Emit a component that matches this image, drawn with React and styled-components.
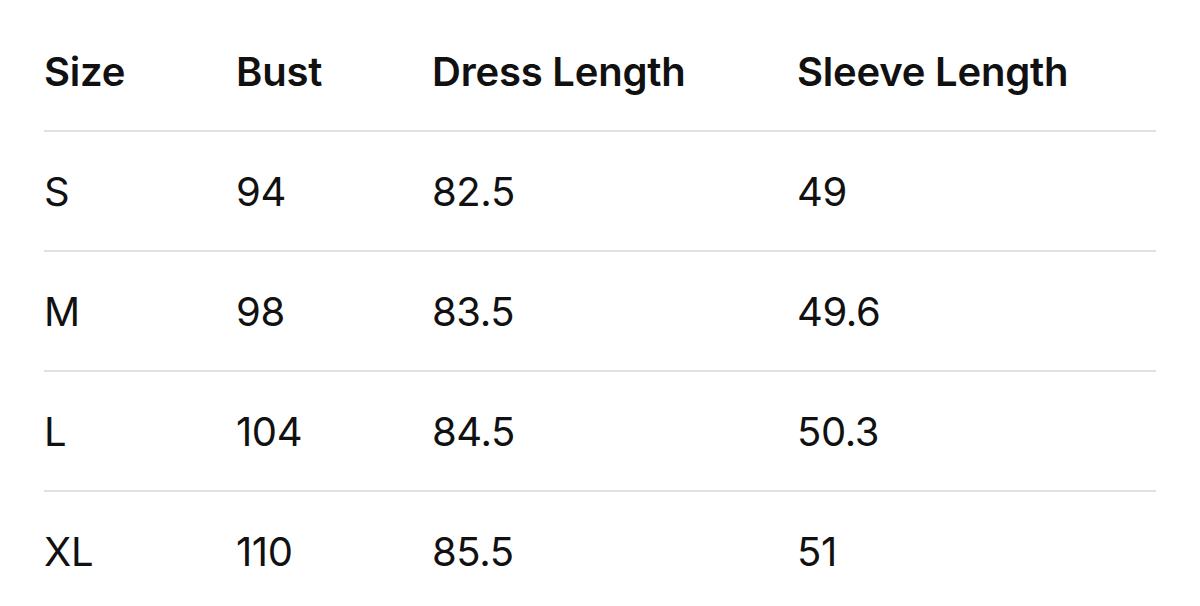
import { createGlobalStyle } from 'styled-components'
import styled from 'styled-components'

const GlobalStyle = createGlobalStyle`
    body {
        margin: 0;
        background: #fff;
        font-family: Inter, "Noto Sans", sans-serif;
        color: #111;
    }
`

const Page = styled.div`
    padding: 12px 44px 0 44px;
    height: 606px;
    box-sizing: border-box;
    overflow: hidden;
`

const Row = styled.div`
    display: grid;
    grid-template-columns: 192px 196px 365px 1fr;
    align-items: center;
    height: 118px;
    border-bottom: ${(p) => (p.last ? 'none' : '2px solid #e2e2e2')};
`

const Cell = styled.div`
    font-size: 40px;
    font-weight: ${(p) => (p.head ? 600 : 400)};
    letter-spacing: ${(p) => (p.head ? '-0.2px' : '-0.4px')};
    white-space: nowrap;
`

const headers = ['Size', 'Bust', 'Dress Length', 'Sleeve Length']
const rows = [
    ['S', '94', '82.5', '49'],
    ['M', '98', '83.5', '49.6'],
    ['L', '104', '84.5', '50.3'],
    ['XL', '110', '85.5', '51'],
]

export default function App() {
    return (
        <>
            <GlobalStyle />
            <Page>
                <Row>
                    {headers.map((h) => (
                        <Cell head key={h}>{h}</Cell>
                    ))}
                </Row>
                {rows.map((r, i) => (
                    <Row key={r[0]} last={i === rows.length - 1}>
                        {r.map((c, j) => (
                            <Cell key={j}>{c}</Cell>
                        ))}
                    </Row>
                ))}
            </Page>
        </>
    )
}
